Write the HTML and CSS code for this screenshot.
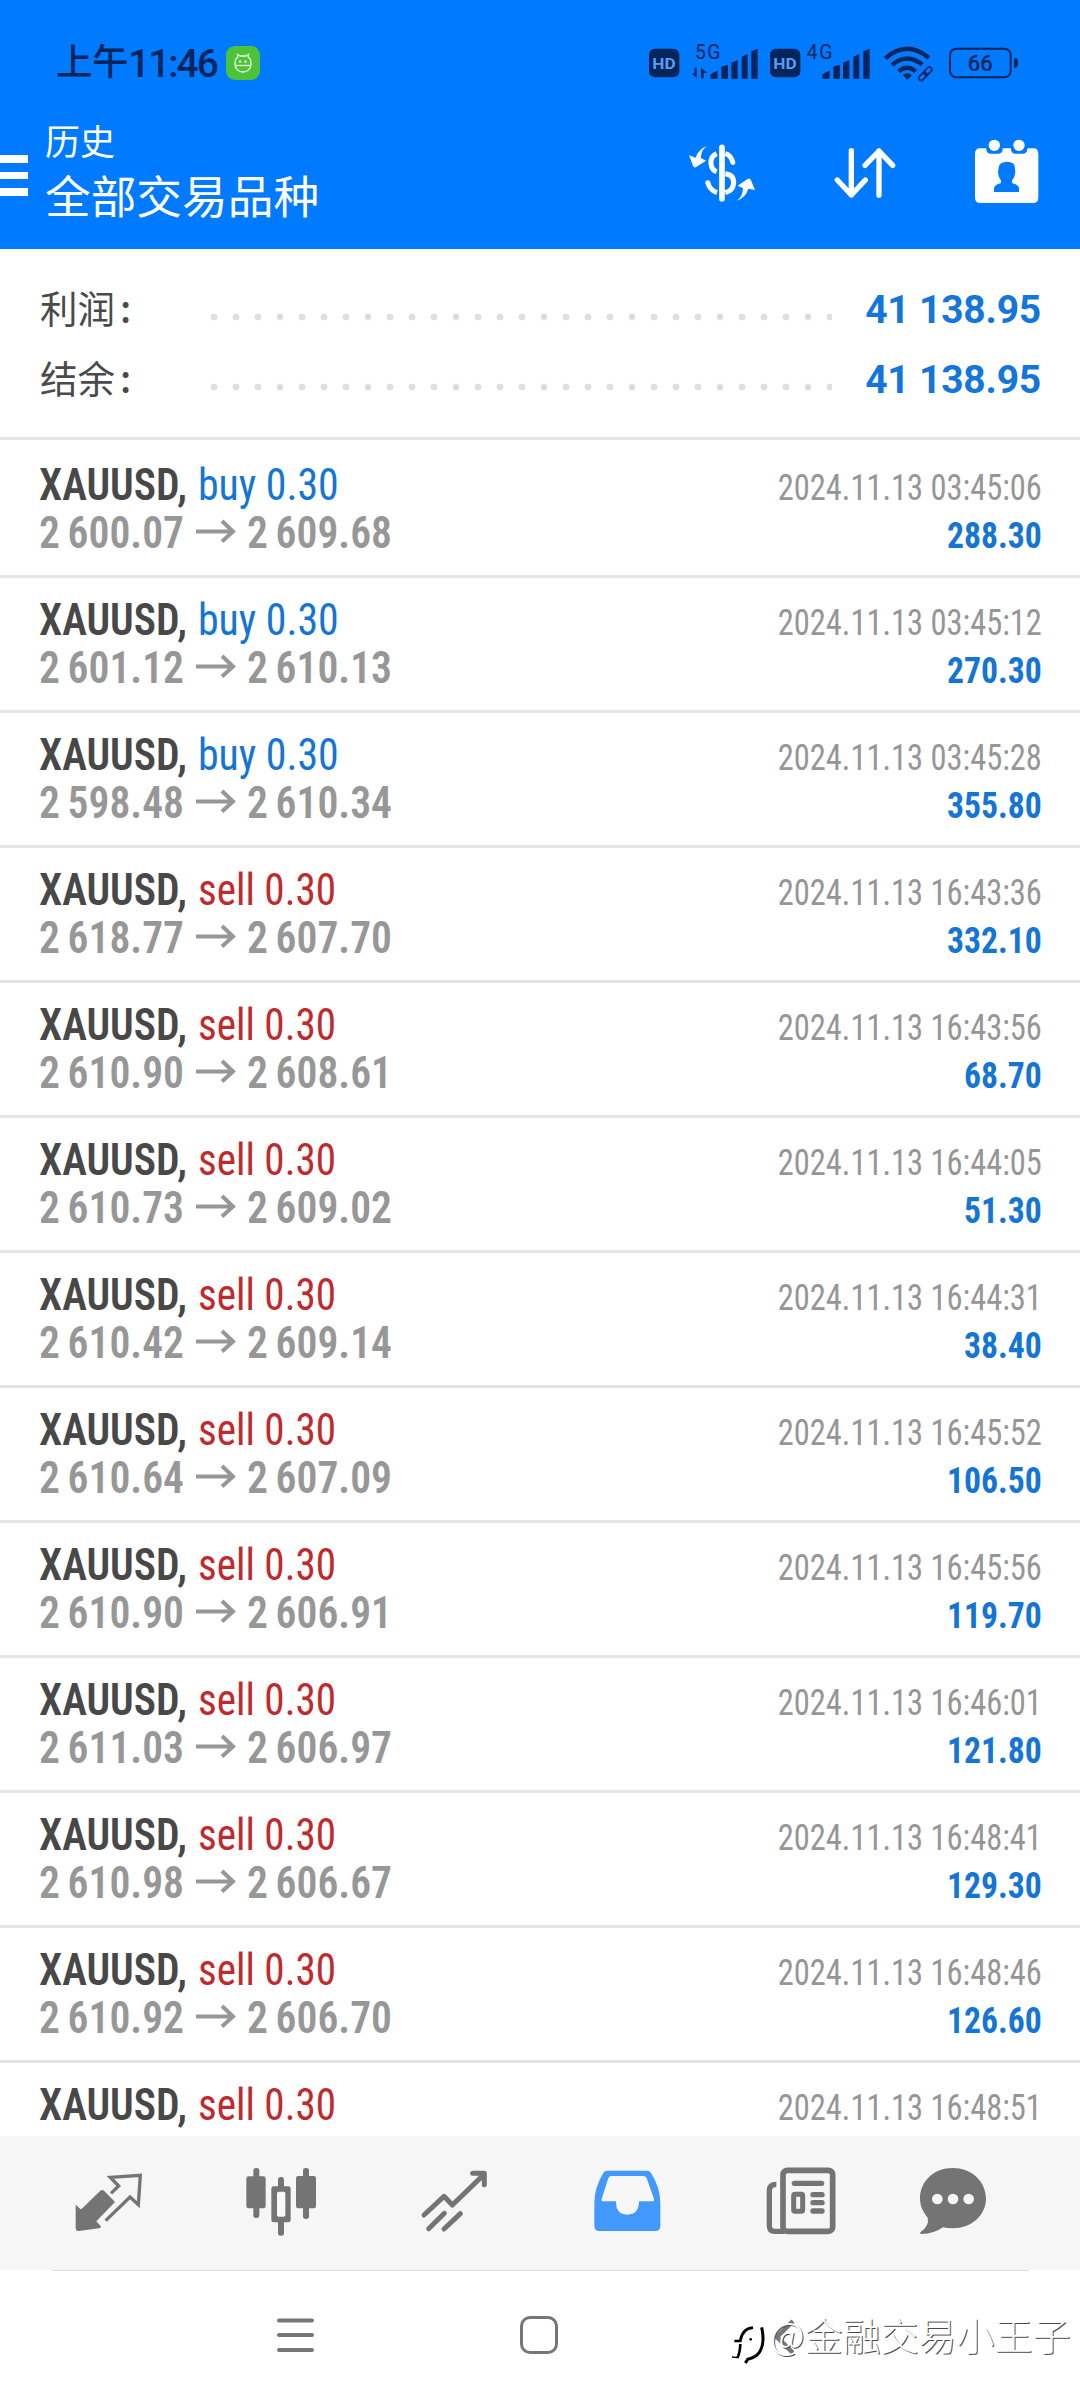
FILE: index.html
```html
<!DOCTYPE html>
<html lang="zh-CN">
<head>
<meta charset="utf-8">
<title>历史</title>
<link rel="stylesheet" href="styles.css">
</head>
<body>
<div class="screen">
  <header class="header">
    <div class="status">
      <div class="clock"><span>上午</span><span class="digits">11:46</span></div>
      <svg class="app-badge" viewBox="0 0 34 34"><rect width="34" height="34" rx="9" fill="#4fc23c"/><g fill="none" stroke="#e9ffdf" stroke-width="1.3"><path d="M9 18c0-4 1-6 3-7l-.5-2.500 3 1.500h5l3-1.500-.5 2.500c2 1 3 3 3 7 0 5-4 8-8 8s-8-3-8-8z"/><path d="M9 19.500h16"/></g><circle cx="14" cy="15.500" r="1.200" fill="#e9ffdf"/><circle cx="19.500" cy="15.500" r="1.200" fill="#e9ffdf"/></svg>
      <svg class="signals" viewBox="141 120 1119 135">
        <g fill="#04245c">
          <rect x="147" y="146" width="91" height="86" rx="18"/>
          <rect x="510" y="146" width="91" height="86" rx="18"/>
          <path d="M331 236v-12q10-9 22-12v24zM364 236v-36l20-6v42zM394 236v-48l19-8v56zM425 236v-66l18-8v74zM454 236v-82l19-8v90z"/>
          <path d="M667 236v-12q10-9 22-12v24zM700 236v-36l20-6v42zM729 236v-48l19-8v56zM760 236v-66l18-8v74zM790 236v-82l19-8v90z"/>
          <path d="M290 203v32l-13-14 6-2v-16zM303 235v-32l19 15-11 1v16z"/>
          <path d="M1242 174h6q6 2 6 14t-6 15h-6z"/>
        </g>
        <text class="hd" x="157" y="206" textLength="70" lengthAdjust="spacingAndGlyphs">HD</text>
        <text class="hd" x="520" y="206" textLength="70" lengthAdjust="spacingAndGlyphs">HD</text>
        <text class="net" x="285" y="176" textLength="76">5G</text>
        <text class="net" x="620" y="176" textLength="77">4G</text>
        <g fill="none" stroke="#04245c">
          <g stroke-width="13"><path d="M856 175q65-57 131-1"/><path d="M876 195q46-39 91-1"/><path d="M896 214q25-22 51 0"/></g>
          <path d="M910 226q12-10 24 0l-12 12z" fill="#04245c" stroke-width="3"/>
          <rect x="1050" y="146" width="182" height="86" rx="19" stroke-width="6"/>
          <g stroke-width="5"><rect x="-15" y="-7" width="28" height="15" rx="7.500" transform="translate(984 212) rotate(-45)"/><rect x="-15" y="-7" width="28" height="15" rx="7.500" transform="translate(969 228) rotate(-45)"/></g>
        </g>
        <text class="battery" x="1141" y="214">66</text>
      </svg>
    </div>
    <div class="toolbar">
      <div class="menu"><i></i><i></i><i></i></div>
      <div class="titles"><div class="title">历史</div><div class="subtitle">全部交易品种</div></div>
      <svg class="tool" viewBox="240 390 270 240" fill="#fff">
        <path d="M324 437q-19 7-22 36l16 9-31 20q-6 1-8-5l-12-31 20 7q9-28 37-36z"/>
        <path d="M409 602q19-10 20-37l-16-8 31-21q6-2 9 5l12 29-20-4q-8 28-36 36z"/>
        <path d="M366 442v154" stroke="#fff" stroke-width="17" stroke-linecap="round"/>
        <path d="M350 461q-19 8-17 30 2 19 17 24M323 546q6 25 28 32M376 461q17 4 23 28M376 521q26 3 25 28-2 23-25 29" fill="none" stroke="#fff" stroke-width="15"/>
        <circle cx="399" cy="488" r="7"/><circle cx="323" cy="548" r="7"/>
      </svg>
      <svg class="tool tool-sort" viewBox="660 390 270 240" fill="none" stroke="#fff" stroke-width="16" stroke-linecap="round" stroke-linejoin="round"><path d="M754 452v133M712 540l42 45 42-45M837 586V453M795 496l42-43 41 43"/></svg>
      <svg class="tool tool-calendar" viewBox="1095 390 270 240">
        <path fill="#fff" d="M1141 445h18v4q2 12 13 12h22q12 0 14-12v-4h25v4q2 12 13 12h22q12 0 14-12v-4h17q16 0 16 16v132q0 16-16 16h-158q-16 0-16-16V461q0-16 16-16z"/>
        <circle cx="1183" cy="436" r="17" fill="#fff"/><circle cx="1257" cy="436" r="17" fill="#fff"/>
        <path fill="#007aff" d="M1197 498q4-12 24-13 21 1 23 13l2 19q-3 17-10 24v8q19 5 21 15v12h-75v-12q2-10 21-15v-8q-7-7-9-24z"/>
      </svg>
    </div>
  </header>

  <section class="summary">
    <div class="sum-row"><span class="sum-label">利润<b>:</b></span><span class="dots"></span><span class="sum-value">41 138.95</span></div>
    <div class="sum-row"><span class="sum-label">结余<b>:</b></span><span class="dots"></span><span class="sum-value">41 138.95</span></div>
  </section>

  <main class="deals" id="deals"></main>

  <nav class="tabs">
    <svg viewBox="-114 -42 519 402"><path fill="#747474" d="M47 164l14 13q3 1 6-2l54-53q6-4 11 0l33 34-56 58 13 14v6l-65 9q-10 0-10-10z"/><path fill="none" stroke="#747474" stroke-width="10" d="M153 130l23-22-25-26 90-6-6 88-25-23-73 71"/></svg>
    <svg viewBox="405 -42 519 402" fill="#747474"><rect x="580" y="54" width="18" height="150" rx="8"/><rect x="559" y="79" width="58" height="96" rx="7"/><rect x="729" y="54" width="18" height="153" rx="8"/><rect x="708" y="78" width="60" height="97" rx="7"/><rect x="654" y="81" width="18" height="176" rx="8"/><rect x="634" y="109" width="58" height="108" rx="7"/><rect x="651" y="125" width="25" height="75" rx="5" fill="#f8f8f8"/></svg>
    <svg viewBox="-96 -42 519 402" fill="none" stroke="#747474" stroke-width="15" stroke-linecap="round" stroke-linejoin="round"><path d="M72 195l60-56 25 26 89-86M218 70h35v34M86 236l47-46M132 237l49-46"/></svg>
    <svg viewBox="423 -42 519 402"><path fill="#4299fb" d="M622 62h119q8 0 12 7 28 44 28 90v69q0 15-15 15H598q-15 0-15-15v-69q0-46 27-90 4-7 12-7z"/><path fill="#f7f7f7" d="M634 78h96q7 0 10 6l22 63q2 7-6 7h-39q0 40-35 40t-34-40h-39q-6 0-4-7l20-63q3-6 9-6z"/></svg>
    <svg viewBox="-78 -42 519 402" fill="none" stroke="#747474"><rect x="129" y="61" width="149" height="183" rx="13" stroke-width="17"/><path d="M109 103q-21 0-21 19v105q0 17 16 17h30" stroke-width="16"/><g stroke-linecap="round" stroke-width="16"><path d="M163 100h82M219 134h27M219 158h27M219 183h27"/></g><rect x="161" y="133" width="27" height="51" rx="4" stroke-width="15"/></svg>
    <svg viewBox="441 -42 393 402"><path fill="#747474" d="M638 54c56 0 100 40 100 91s-43 90-100 90q-17 0-29-3-26 19-65 20-6-1-3-5 28-21 22-44c-16-19-23-37-23-58 0-51 42-91 98-91z"/><g fill="#f6f6f6"><circle cx="592" cy="147" r="16"/><circle cx="639" cy="147" r="16"/><circle cx="686" cy="147" r="16"/></g></svg>
  </nav>

  <footer class="system">
    <svg class="recent" viewBox="0 0 37 38" stroke="#767676" stroke-width="4" stroke-linecap="round"><path d="M2 4.500h33M2 19h33M2 34h33"/></svg>
    <div class="home"></div>
    <svg class="back" viewBox="0 0 20 36" fill="none" stroke="#777" stroke-width="4.500"><path d="M19 2L3 18l16 16"/></svg>
    <div class="watermark">
      <svg viewBox="39 78 108 132" fill="none" stroke="#000"><path stroke-width="8" d="M43 123h18q5-37 38-40M61 132q-1 26-9 42"/><path stroke-width="9" d="M125 82q11 48-7 75-10 15-35 21l-7 11"/><path stroke-width="4" d="M54 173l-18-2"/><circle cx="92" cy="118" r="4" fill="#000" stroke="none"/></svg>
      <span>@金融交易小王子</span>
    </div>
  </footer>
</div>
<script src="deals.js"></script>
</body>
</html>
```
FILE: deals.js
```js
const deals = [
  ["buy", "2 600.07", "2 609.68", "03:45:06", "288.30"],
  ["buy", "2 601.12", "2 610.13", "03:45:12", "270.30"],
  ["buy", "2 598.48", "2 610.34", "03:45:28", "355.80"],
  ["sell", "2 618.77", "2 607.70", "16:43:36", "332.10"],
  ["sell", "2 610.90", "2 608.61", "16:43:56", "68.70"],
  ["sell", "2 610.73", "2 609.02", "16:44:05", "51.30"],
  ["sell", "2 610.42", "2 609.14", "16:44:31", "38.40"],
  ["sell", "2 610.64", "2 607.09", "16:45:52", "106.50"],
  ["sell", "2 610.90", "2 606.91", "16:45:56", "119.70"],
  ["sell", "2 611.03", "2 606.97", "16:46:01", "121.80"],
  ["sell", "2 610.98", "2 606.67", "16:48:41", "129.30"],
  ["sell", "2 610.92", "2 606.70", "16:48:46", "126.60"],
  ["sell", null, null, "16:48:51", null]
];
const arrow = '<svg class="arrow" viewBox="0 0 40 24"><path d="M0 12.500h37M26 2l11 10.500L26 22.500"/></svg>';
document.getElementById("deals").innerHTML = deals.map(([side, open, close, time, profit]) => `
  <article class="deal">
    <div class="left">
      <div class="symbol"><b>XAUUSD,</b><span class="side ${side}">${side} 0.30</span></div>
      ${open ? `<div class="prices"><span class="price">${open}</span>${arrow}<span class="price">${close}</span></div>` : ""}
    </div>
    <div class="right"><div class="time">2024.11.13 ${time}</div>${profit ? `<div class="profit">${profit}</div>` : ""}</div>
  </article>`).join("");
```
FILE: styles.css
```css
* { box-sizing: border-box; }
body { margin: 0; background: #fff; font-family: Roboto, "Noto Sans CJK SC", sans-serif; }
svg { display: block; flex: none; }

.screen { width: 1080px; height: 2400px; overflow: hidden; display: flex; flex-direction: column; background: #fff; }

/* Header */
.header { height: 249px; flex: none; background: #007aff; color: #fff; }
.status { height: 125px; display: flex; align-items: flex-start; padding-top: 40px; }
.clock { display: flex; width: 169px; margin: -2px 0 0 56px; font: 500 36.500px/50px Roboto, "Noto Sans CJK SC", sans-serif; color: #04245c; white-space: nowrap; letter-spacing: -.5px; }
.digits { font-size: 39px; letter-spacing: -2px; padding-top: 1px; }
.app-badge { width: 34px; height: 34px; margin: 6px 0 0 1px; }
.signals { width: 373px; height: 45px; margin-left: 387px; }
.hd { font: 700 42px Roboto, sans-serif; fill: #5b9cf2; }
.net { font: 400 58px Roboto, sans-serif; fill: #04245c; }
.battery { font: 500 66px Roboto, sans-serif; fill: #04245c; text-anchor: middle; }
.toolbar { height: 124px; display: flex; align-items: flex-start; }
.menu { width: 28px; padding-top: 30px; display: grid; gap: 9px; }
.menu i { height: 7.500px; background: #fff; }
.titles { width: 652px; padding-left: 17px; font-family: "Noto Sans CJK SC", sans-serif; margin-top: -8px; }
.title { font-size: 35px; line-height: 46px; }
.subtitle { font-size: 45.700px; line-height: 62px; }
.tool { width: 90px; height: 80px; margin-top: 5px; }
.tool-sort { margin-left: 50px; }
.tool-calendar { margin-left: 55px; }

/* Totals */
.summary { height: 191px; flex: none; border-bottom: 3px solid #e4e4e6; padding: 25px 39px 0 40px; }
.sum-row { height: 70px; display: flex; align-items: center; }
.sum-label { width: 170px; margin-top: -4px; font: 400 37.500px/70px "Noto Sans CJK SC", sans-serif; color: #4a4a4a; }
.sum-label b { margin-left: 5px; font-weight: 500; }
.dots { width: 622px; height: 8px; margin-top: 15px; background: radial-gradient(circle at 4px 4px, #dededf 3px, transparent 3.800px) 0 0 / 22px 8px repeat-x; }
.sum-value { margin: 2px 0 0 auto; font-size: 39px; font-weight: 700; letter-spacing: -.2px; line-height: 70px; color: #1475da; }

/* Deals */
.deals { flex: 1; min-height: 0; overflow: hidden; padding-top: 3px; font-family: "Roboto Condensed", Roboto, sans-serif; }
.deal { height: 135px; border-bottom: 3px solid #e4e4e6; padding: 18px 38px 0 39px; display: flex; justify-content: space-between; }
.symbol { display: flex; font-size: 44px; line-height: 48px; color: #484848; }
.symbol b { width: 159px; font-weight: 600; transform: scaleX(.945); transform-origin: left; }
.side { transform: scaleX(.95); transform-origin: left; }
.buy { color: #1475d4; }
.sell { color: #bf2a2e; transform: scaleX(.935); }
.prices { display: flex; font-size: 44px; line-height: 48px; font-weight: 600; color: #979797; }
.price { width: 157px; word-spacing: -2px; transform: scaleX(.945); transform-origin: left; }
.arrow { width: 40px; height: 24px; margin: 10px 11px 0 0; fill: none; stroke: #979797; stroke-width: 4; }
.right { text-align: right; font-size: 36px; line-height: 48px; padding-top: 3px; }
.time { color: #969696; transform: scaleX(.902); transform-origin: right; }
.profit { font-weight: 700; color: #1475d4; transform: scaleX(.935); transform-origin: right; }

/* Tabs */
.tabs { height: 134px; flex: none; background: #f6f6f6; display: grid; grid-template-columns: repeat(5, 173px) 131px; padding-left: 22px; }
.tabs svg { width: 100%; height: 134px; }

/* System bar */
.system { position: relative; height: 130px; flex: none; display: flex; padding: 46px 0 0 277px; }
.system::before { content: ""; position: absolute; left: 52px; right: 51px; top: 0; height: 1px; background: #dedede; }
.recent { width: 37px; height: 38px; }
.home { width: 38px; height: 38px; margin-left: 206px; border: 3px solid #767676; border-radius: 10px; }
.back { width: 20px; height: 36px; margin: 3px 0 0 216px; }
.watermark { position: absolute; left: 733px; top: 56px; display: flex; }
.watermark svg { width: 36px; height: 44px; overflow: visible; }
.watermark span { font: 300 38px/56px "Noto Sans CJK SC", sans-serif; color: #fff; text-shadow: 1px 1px 0 #4a4a4a; margin: -20px 0 0 1px; }
```
